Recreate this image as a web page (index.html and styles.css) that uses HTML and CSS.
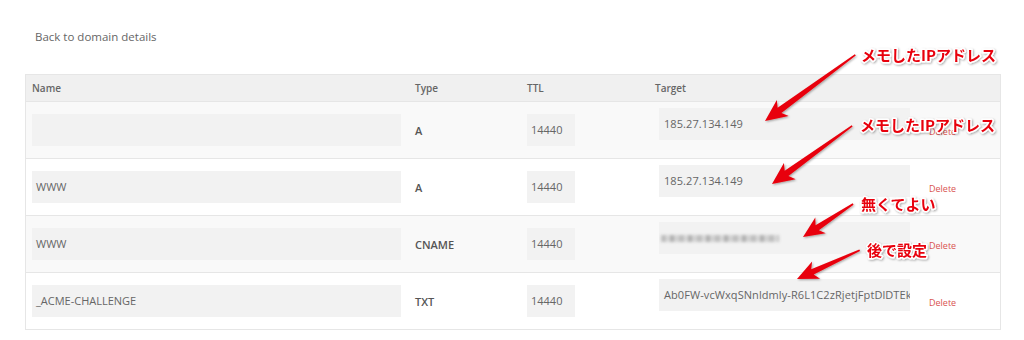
FILE: index.html
```html
<!DOCTYPE html>
<html>
<head>
<meta charset="utf-8">
<link rel="stylesheet" href="styles.css">
</head>
<body>
<div class="page">
  <a class="back">Back to domain details</a>
  <div class="table">
    <div class="row head">
      <div class="c name">Name</div>
      <div class="c type">Type</div>
      <div class="c ttl">TTL</div>
      <div class="c target">Target</div>
      <div class="c del"></div>
    </div>
    <div class="row odd">
      <div class="c name"><div class="inp wide"></div></div>
      <div class="c type">A</div>
      <div class="c ttl"><div class="inp small">14440</div></div>
      <div class="c target"><div class="inp tgt">185.27.134.149</div></div>
      <div class="c del"><span class="delete">Delete</span></div>
    </div>
    <div class="row">
      <div class="c name"><div class="inp wide">WWW</div></div>
      <div class="c type">A</div>
      <div class="c ttl"><div class="inp small">14440</div></div>
      <div class="c target"><div class="inp tgt">185.27.134.149</div></div>
      <div class="c del"><span class="delete">Delete</span></div>
    </div>
    <div class="row odd">
      <div class="c name"><div class="inp wide">WWW</div></div>
      <div class="c type">CNAME</div>
      <div class="c ttl"><div class="inp small">14440</div></div>
      <div class="c target"><div class="inp tgt"><span class="blur"></span></div></div>
      <div class="c del"><span class="delete">Delete</span></div>
    </div>
    <div class="row">
      <div class="c name"><div class="inp wide">_ACME-CHALLENGE</div></div>
      <div class="c type">TXT</div>
      <div class="c ttl"><div class="inp small">14440</div></div>
      <div class="c target"><div class="inp tgt">Ab0FW-vcWxqSNnldmly-R6L1C2zRjetjFptDlDTEk</div></div>
      <div class="c del"><span class="delete">Delete</span></div>
    </div>
  </div>
</div>
<svg class="notes" width="1024" height="340" viewBox="0 0 1024 340">
  <defs>
    <filter id="sh" x="-20%" y="-20%" width="140%" height="140%">
      <feDropShadow dx="1" dy="1" stdDeviation="0.8" flood-color="#000" flood-opacity="0.35"/>
    </filter>
  </defs>
  <g class="arrows" filter="url(#sh)">
    <polygon transform="translate(765,121) rotate(143.75)" points="0,0 -22,-10 -18,-3.2 -112,-0.8 -112,0.8 -18,3.2 -22,10"/>
    <polygon transform="translate(772,184) rotate(144.06)" points="0,0 -22,-10 -18,-3.2 -99,-0.8 -99,0.8 -18,3.2 -22,10"/>
    <polygon transform="translate(803,237) rotate(146.6)" points="0,0 -21,-9.5 -17,-3 -60,-0.8 -60,0.8 -17,3 -21,9.5"/>
    <polygon transform="translate(797,279) rotate(155.3)" points="0,0 -21,-9.5 -17,-3 -69,-0.8 -69,0.8 -17,3 -21,9.5"/>
  </g>
  <g class="labels" filter="url(#sh)">
    <text x="861" y="61">メモしたIPアドレス</text>
    <text x="860" y="131">メモしたIPアドレス</text>
    <text x="861" y="210">無くてよい</text>
    <text x="867" y="256">後で設定</text>
  </g>
</svg>
</body>
</html>
```
FILE: styles.css
```css
html, body {
  margin: 0;
  padding: 0;
  background: #fff;
}
body {
  width: 1024px;
  height: 340px;
  position: relative;
  overflow: hidden;
  font-family: "Open Sans", "Liberation Sans", sans-serif;
  color: #666;
}
.page {
  padding: 29px 0 0 25px;
}
.back {
  display: block;
  margin-left: 10px;
  font-size: 11.5px;
  line-height: 16px;
  color: #666;
}
.table {
  margin-top: 29px;
  width: 974px;
  border: 1px solid #e6e6e6;
}
.row {
  display: grid;
  grid-template-columns: 389px 112px 128px 274px 1fr;
  height: 56px;
  border-top: 1px solid #e6e6e6;
  background: #fff;
}
.row.odd {
  background: #f9f9f9;
}
.row.head {
  height: 26px;
  border-top: none;
  background: #f0f0f0;
  font-size: 10px;
  font-weight: 600;
  color: #666;
}
.c {
  display: flex;
  align-items: center;
  min-width: 0;
}
.head .name { padding-left: 6px; }
.row .name { padding-left: 6px; }
.type {
  font-size: 11px;
  font-weight: 600;
  color: #555;
}
.head .type { font-size: 10px; color: #666; }
.inp {
  box-sizing: border-box;
  height: 32px;
  background: #f2f2f2;
  font-size: 11px;
  line-height: 32px;
  color: #666;
  white-space: nowrap;
  overflow: hidden;
}
.inp.wide {
  width: 369px;
  padding-left: 4px;
}
.inp.small {
  width: 48px;
  padding-left: 4px;
}
.row .target {
  align-items: flex-start;
  padding-top: 6px;
}
.head .target {
  align-items: center;
  padding-top: 0;
}
.inp.tgt {
  margin-left: 4px;
  width: 251px;
  padding-left: 5px;
  display: flex;
  align-items: center;
  letter-spacing: 0.08px;
}
.blur {
  display: block;
  width: 118px;
  height: 7px;
  margin-left: -3px;
  background: repeating-linear-gradient(90deg, #b9b9b9 0 5px, #d6d6d6 5px 9px, #a9a9a9 9px 13px, #cfcfcf 13px 18px);
  filter: blur(1.4px);
  opacity: 0.9;
}
.del {
  padding-top: 3px;
}
.delete {
  font-size: 9px;
  color: #d9534f;
}
.notes {
  position: absolute;
  left: 0;
  top: 0;
  pointer-events: none;
}
.arrows polygon {
  fill: #e8000b;
}
.labels text {
  font-family: "Noto Sans CJK JP", "Noto Sans", sans-serif;
  font-size: 15px;
  font-weight: 700;
  fill: #e8000b;
  stroke: #fff;
  stroke-width: 3px;
  stroke-linejoin: round;
  paint-order: stroke;
}
```
